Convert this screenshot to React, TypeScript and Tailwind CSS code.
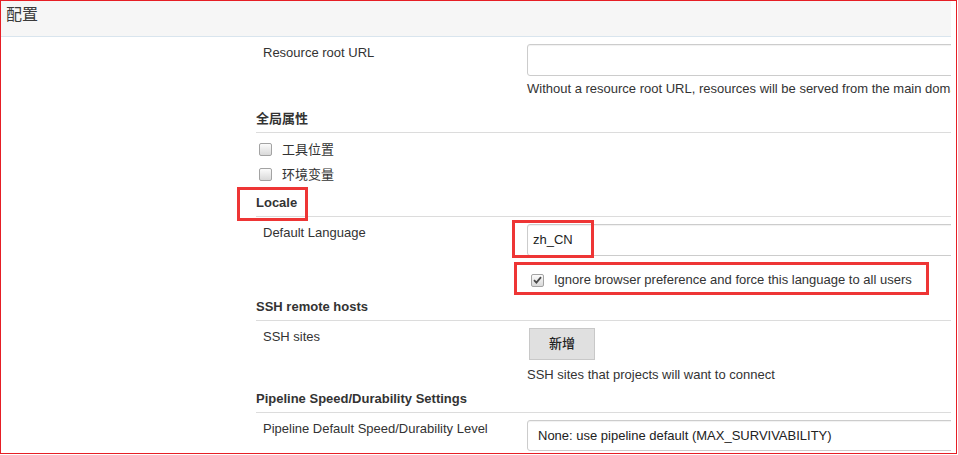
import React from "react";

const font = "font-['Liberation_Sans','Noto_Sans_CJK_SC',Arial,sans-serif]";

function Box({ checked = false }: { checked?: boolean }) {
  return (
    <span className="flex h-[13px] w-[13px] shrink-0 items-center justify-center rounded-[2px] border border-[#a3a3a3] bg-linear-to-b from-[#fbfbfb] to-[#d9d9d9]">
      {checked && (
        <svg width="9" height="8" viewBox="0 0 9 8">
          <path d="M1 4.2 L3.4 6.6 L8 1.2" fill="none" stroke="#4a4a4a" strokeWidth="1.8" />
        </svg>
      )}
    </span>
  );
}

function Heading({ children, className = "" }: { children: React.ReactNode; className?: string }) {
  return (
    <div className={`border-b border-[#dcdcdc] pb-[5px] text-[13px] leading-[16px] font-bold text-[#333] ${className}`}>
      {children}
    </div>
  );
}

function Row({ label, children, className = "" }: { label: string; children: React.ReactNode; className?: string }) {
  return (
    <div className={`flex ${className}`}>
      <div className="w-[271px] shrink-0 pl-[7px] pt-[1px] text-[13px] leading-[16px] text-[#333]">{label}</div>
      <div className="min-w-0 flex-1">{children}</div>
    </div>
  );
}

function Field({ value = "", h = "h-[32px]", pl = "pl-[5px]" }: { value?: string; h?: string; pl?: string }) {
  return (
    <div
      className={`flex ${h} w-[460px] items-center rounded-[3px] border border-[#cccccc] ${pl} text-[13px] text-[#222] shadow-[inset_0_1px_1px_rgba(0,0,0,0.06)]`}
    >
      {value}
    </div>
  );
}

export default function App() {
  return (
    <div className={`relative h-[454px] w-[957px] overflow-hidden border border-[#e61e25] bg-white ${font}`}>
      <div className="w-[950px] overflow-hidden">
        <div className="h-[36px] border-b border-[#d9e5ee] bg-[#f6f6f6] pt-[4px] pl-[5px] text-[16px] leading-[20px] text-[#3a3a3a]">
          配置
        </div>

        <div className="pl-[255px]">
          <Row label="Resource root URL" className="mt-[7px]">
            <Field />
            <div className="mt-[5px] text-[13px] leading-[16px] whitespace-nowrap text-[#333]">
              Without a resource root URL, resources will be served from the main domain with Content-Security-Policy set.
            </div>
          </Row>

          <Heading className="mt-[14px]">全局属性</Heading>
          <div className="mt-[4px]">
            {["工具位置", "环境变量"].map((t) => (
              <div key={t} className="flex h-[25px] items-center pl-[3px] text-[13px] leading-[16px] text-[#333]">
                <Box />
                <span className="ml-[10px] pt-[1px]">{t}</span>
              </div>
            ))}
          </div>

          <Heading className="mt-[8px]">Locale</Heading>
          <Row label="Default Language" className="mt-[7px]">
            <Field value="zh_CN" />
            <div className="mt-[14px] flex h-[20px] items-center pl-[4px] text-[13px] leading-[16px] whitespace-nowrap text-[#333]">
              <Box checked />
              <span className="ml-[10px]">Ignore browser preference and force this language to all users</span>
            </div>
          </Row>

          <Heading className="mt-[9px]">SSH remote hosts</Heading>
          <Row label="SSH sites" className="mt-[7px]">
            <button className="ml-[2px] flex h-[32px] w-[66px] items-center justify-center border border-[#c8c8c8] bg-[#e0e0e0] text-[13px] font-medium text-[#222]">
              新增
            </button>
            <div className="mt-[7px] text-[13px] leading-[16px] text-[#333]">SSH sites that projects will want to connect</div>
          </Row>

          <Heading className="mt-[8px]">Pipeline Speed/Durability Settings</Heading>
          <Row label="Pipeline Default Speed/Durability Level" className="mt-[7px]">
            <Field value="None: use pipeline default (MAX_SURVIVABILITY)" h="h-[31px]" pl="pl-[10px]" />
          </Row>
        </div>
      </div>

      {/* red annotation boxes */}
      <div className="absolute top-[186px] left-[236px] h-[34px] w-[71px] border-[3px] border-[#ee3535]" />
      <div className="absolute top-[219px] left-[511px] h-[38px] w-[82px] border-[3px] border-[#ee3535]" />
      <div className="absolute top-[261px] left-[513px] h-[33px] w-[415px] border-[3px] border-[#ee3535]" />
    </div>
  );
}
